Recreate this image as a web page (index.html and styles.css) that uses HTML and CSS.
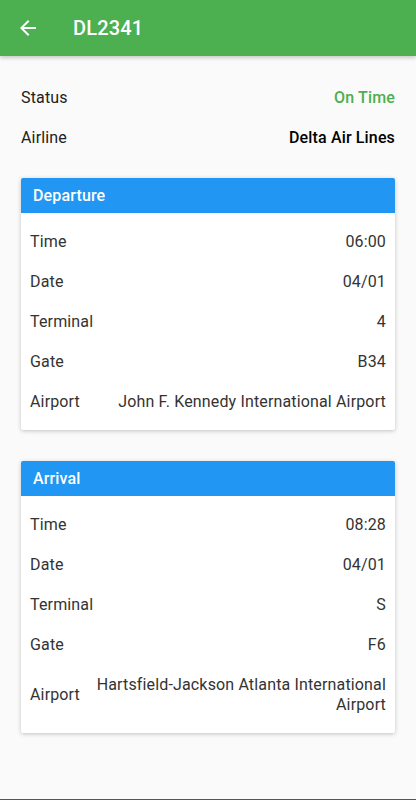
FILE: index.html
```html
<!DOCTYPE html>
<html lang="en">
<head>
    <meta charset="UTF-8">
    <meta name="viewport" content="width=device-width, initial-scale=1.0">
    <title>DL2341</title>
    <link rel="stylesheet" href="styles.css">
</head>
<body>
    <header class="app-bar">
        <button class="back" aria-label="Back">
            <svg width="24" height="24" viewBox="0 0 24 24"><path fill="#fff" d="M20 11H7.83l5.59-5.59L12 4l-8 8 8 8 1.41-1.41L7.83 13H20v-2z"/></svg>
        </button>
        <h1>DL2341</h1>
    </header>

    <main class="content">
        <div class="row">
            <span class="label">Status</span>
            <span class="value status">On Time</span>
        </div>
        <div class="row">
            <span class="label">Airline</span>
            <span class="value strong">Delta Air Lines</span>
        </div>

        <section class="card">
            <h2 class="card-title">Departure</h2>
            <div class="card-body">
                <div class="item"><span>Time</span><span class="val">06:00</span></div>
                <div class="item"><span>Date</span><span class="val">04/01</span></div>
                <div class="item"><span>Terminal</span><span class="val">4</span></div>
                <div class="item"><span>Gate</span><span class="val">B34</span></div>
                <div class="item"><span>Airport</span><span class="val">John F. Kennedy International Airport</span></div>
            </div>
        </section>

        <section class="card">
            <h2 class="card-title">Arrival</h2>
            <div class="card-body">
                <div class="item"><span>Time</span><span class="val">08:28</span></div>
                <div class="item"><span>Date</span><span class="val">04/01</span></div>
                <div class="item"><span>Terminal</span><span class="val">S</span></div>
                <div class="item"><span>Gate</span><span class="val">F6</span></div>
                <div class="item"><span>Airport</span><span class="val">Hartsfield-Jackson Atlanta International Airport</span></div>
            </div>
        </section>
    </main>
</body>
</html>
```

FILE: styles.css
```css
html {
    height: 100%;
}

body {
    margin: 0;
    min-height: 100%;
    font-family: Roboto, "Liberation Sans", sans-serif;
    letter-spacing: 0.15px;
    background: #fafafa;
    color: #212121;
    box-sizing: border-box;
    border-bottom: 1px solid #555;
}

.app-bar {
    height: 56px;
    background: #4caf50;
    display: flex;
    align-items: center;
    padding-left: 16px;
    box-shadow: 0 2px 4px rgba(0, 0, 0, 0.2);
}

.back {
    background: none;
    border: none;
    padding: 0;
    width: 24px;
    height: 24px;
    display: flex;
}

.app-bar h1 {
    margin: 0 0 0 33px;
    color: #fff;
    font-size: 20px;
    font-weight: 500;
}

.content {
    padding: 21px 21px 0;
}

.row {
    display: flex;
    justify-content: space-between;
    align-items: center;
    height: 40px;
    font-size: 16px;
}

.status {
    color: #4caf50;
    font-weight: 500;
}

.strong {
    font-weight: 500;
    color: #000;
}

.card {
    background: #fff;
    margin-top: 21px;
    margin-bottom: 31px;
    border-radius: 2px;
    box-shadow: 0 1px 4px rgba(0, 0, 0, 0.22);
    overflow: hidden;
}

.card + .card {
    margin-top: 0;
}

.card-title {
    margin: 0;
    height: 35px;
    line-height: 36px;
    background: #2196f3;
    color: #fff;
    font-size: 16px;
    font-weight: 500;
    padding-left: 12px;
}

.card-body {
    padding: 9px 9px 8px 9px;
}

.item {
    display: flex;
    justify-content: space-between;
    align-items: center;
    gap: 16px;
    padding: 10px 0;
    font-size: 16px;
    line-height: 20px;
    color: #333;
}

.item span:first-child {
    flex-shrink: 0;
}

.val {
    text-align: right;
}
```
